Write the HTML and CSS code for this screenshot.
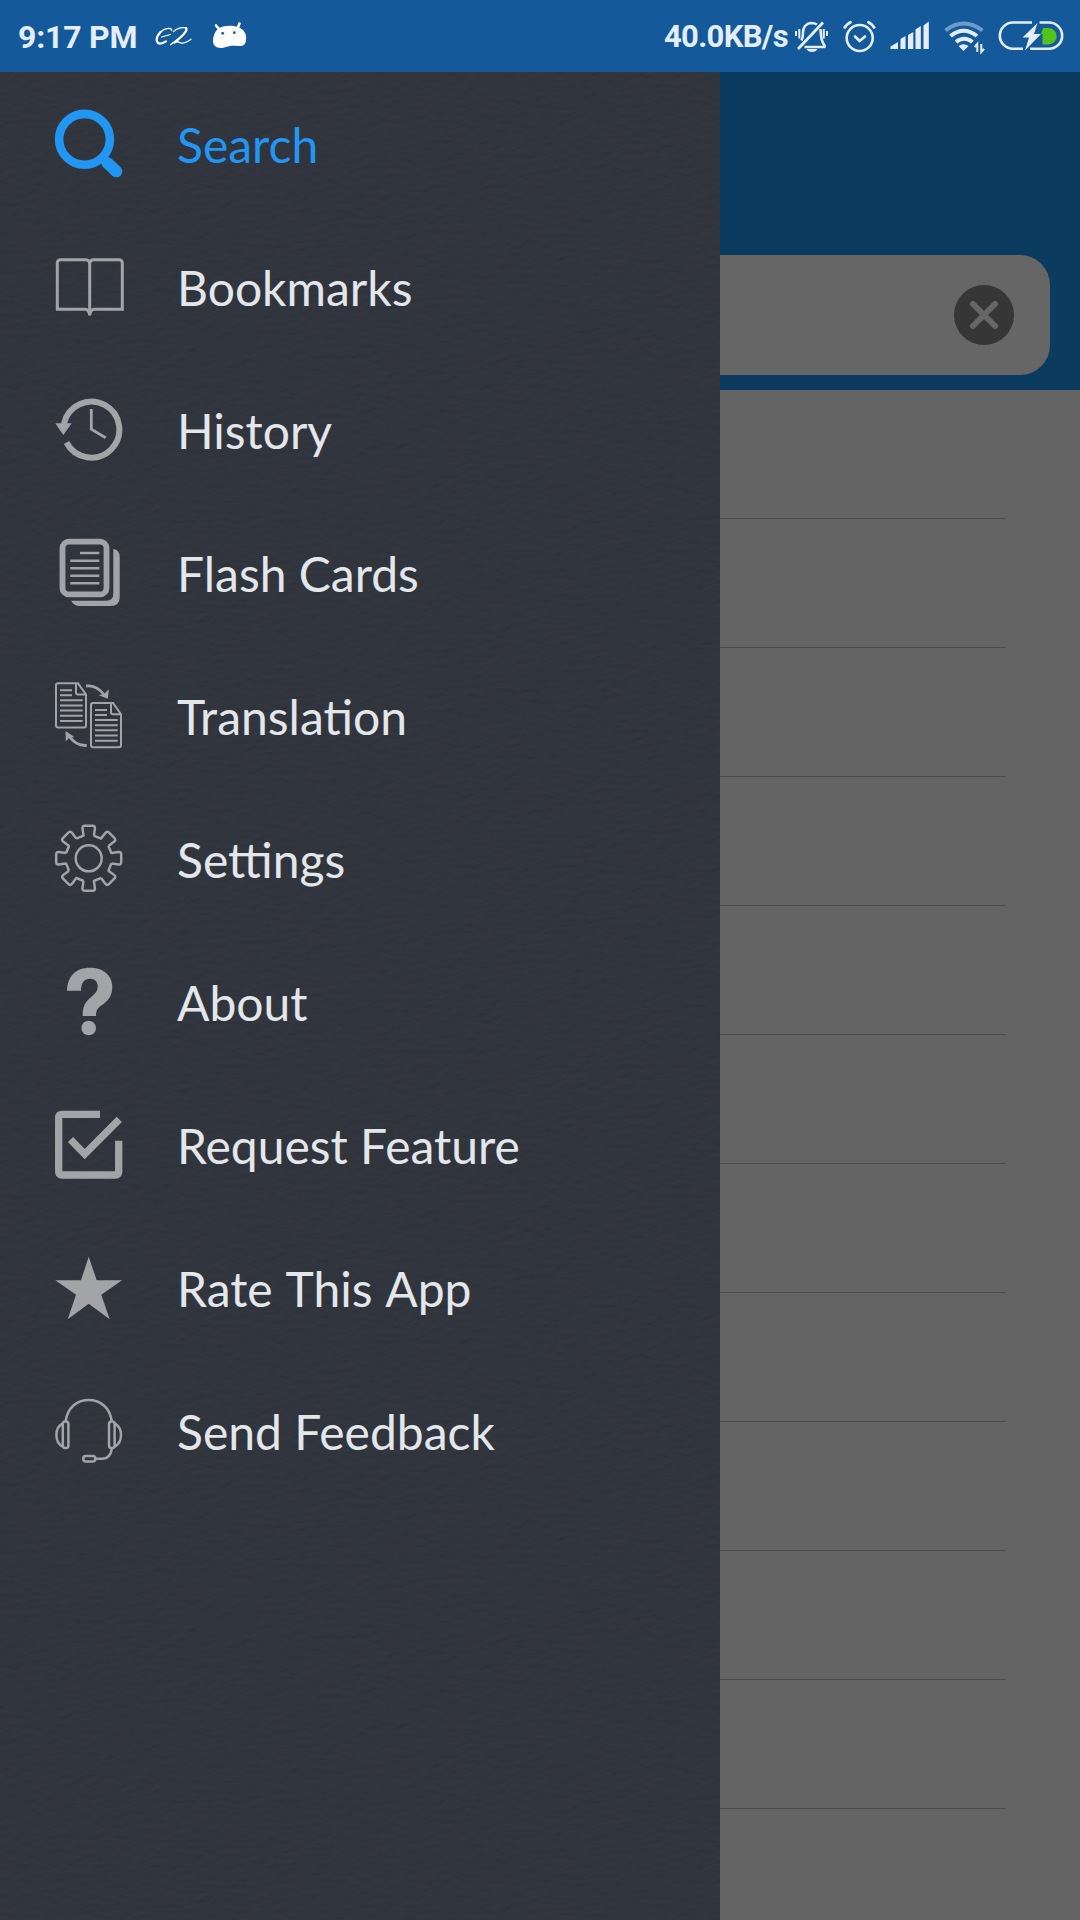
FILE: index.html
```html
<!DOCTYPE html>
<html lang="en">
<head>
<meta charset="utf-8">
<title>Dictionary</title>
<link rel="stylesheet" href="styles.css">
</head>
<body>
<div class="screen">
  <header class="status">
    <span class="time">9:17 PM</span>
    <svg class="status-icon" width="50" height="72" viewBox="150 0 50 72">
      <g fill="none" stroke="#fff" stroke-linecap="round" stroke-linejoin="round">
        <path stroke-width="1.300" d="M171.500 30.500c1-3-6-3-11 1.500-3.500 3.500-4.500 7-3.500 9"/>
        <path stroke-width="2.200" d="M160.500 32c-3.500 4-5 8.500-2.500 11 2 1.300 5 .3 8-1.700"/>
        <path stroke-width="1.200" d="M161.500 37l9-2.500"/>
        <path stroke-width="1.300" d="M173.500 31.500c3-2.500 8-4.500 13-3.500"/>
        <path stroke-width="2.300" d="M186 28.200c2.500 2-4 8-11.500 14.300"/>
        <path stroke-width="1.300" d="M170.500 44.800c3-3.500 7-3.500 10-2 3 1 7-1 10.500-3.600"/>
      </g>
    </svg>
    <svg class="status-icon" width="60" height="72" viewBox="200 0 60 72">
      <path fill="#fff" d="M219 28c6-3 14-3 20-.5 5 2 8 7 7 12 0 5-3 7-8 6.500-6-.5-8 0-12 1-6 2-13 1-13-6 0-5 2-10 6-13z"/>
      <path fill="none" stroke="#fff" stroke-width="2.600" stroke-linecap="round" d="M219 29l-3-3.500M237.500 28.500l2-5"/>
      <circle cx="222.700" cy="33.300" r="1.400" fill="#145999"/><circle cx="234.300" cy="32.700" r="1.400" fill="#145999"/>
    </svg>
    <span class="speed">40.0KB/s</span>
    <svg class="status-icon" width="46" height="72" viewBox="792 0 46 72">
      <g fill="none" stroke="#e4eefa" stroke-width="2.600" stroke-linejoin="round">
        <path d="M801.500 40.500c1-2 1.500-4 1.500-8 0-5 3-9 8-9.500 2.500 0 4.500.5 6 1.500"/>
        <path d="M820.500 29c.5 9 1 12 4 16.500v1.500h-20"/>
        <path stroke-width="2.800" d="M823 22.500l-25 26.500"/>
        <path stroke-width="2" d="M796 31v5M799.300 29v9.500M823.800 29v9.500M827 31v5"/>
      </g>
      <path fill="#e4eefa" d="M806.500 49h11q-1.500 3-5.500 3t-5.500-3z"/>
    </svg>
    <svg class="status-icon" width="46" height="72" viewBox="838 0 46 72">
      <g fill="none" stroke="#e4eefa" stroke-width="2.600" stroke-linecap="round">
        <circle cx="859.700" cy="38" r="13"/>
        <path stroke-width="2.700" stroke-linejoin="round" d="M855 36.500l4.700 4.500 5.300-4.500"/>
        <path stroke-width="3" d="M844.800 27.300q2-3 5.600-5M868.500 22.300q3.600 2 5.600 5"/>
      </g>
    </svg>
    <svg class="status-icon" width="52" height="72" viewBox="884 0 52 72">
      <path fill="#e4eefa" d="M890.500 49v-2.500l7.500-4.500v7zM900.500 49v-10l5-3v13zM908 49v-14l5.300-3v17zM915.500 49v-19.500l5.300-3.500v23zM923.500 49v-23.500l5.300-4v27.500z"/>
    </svg>
    <svg class="status-icon" width="54" height="72" viewBox="936 0 54 72">
      <g fill="none" stroke="#e4eefa" stroke-width="4">
        <path stroke="#6b9cc9" d="M945.500 30.500q18-14 37 0"/>
        <path d="M950.500 36q13-10.500 26.500 0M956 42q8-6.500 16.500 0"/>
        <path stroke-width="2" d="M977.300 52v-8l-2.800 3.200M981.300 44v8l2.800-3.200"/>
      </g>
      <path fill="#e4eefa" d="M958.500 46q5-3.500 10 0l-5 5z"/>
    </svg>
    <svg class="status-icon" width="90" height="72" viewBox="990 0 90 72">
      <path fill="none" stroke="#e4eefa" stroke-width="2.600" d="M1032 22.500h-19a13 13 0 0 0 0 26.300h10M1039.500 22.500h9.500a13 13 0 0 1 0 26.300h-19"/>
      <path fill="#52c41c" d="M1043 28h5.500a8 8 0 0 1 0 16.500h-6V34h-1.500z"/>
      <path fill="#e4eefa" d="M1037.500 23l-15 14.500h6.500l-4 13 16-16.500h-7z"/>
    </svg>
  </header>

  <main class="body">
    <nav class="drawer">
      <svg class="grain" width="720" height="1848" aria-hidden="true">
        <filter id="leather" x="0" y="0" width="100%" height="100%">
          <feTurbulence type="fractalNoise" baseFrequency="0.09 0.2" numOctaves="3" seed="4"/>
          <feDiffuseLighting surfaceScale="1.100" lighting-color="#34373f" diffuseConstant="1.350">
            <feDistantLight azimuth="250" elevation="48"/>
          </feDiffuseLighting>
        </filter>
        <rect width="720" height="1848" filter="url(#leather)"/>
      </svg>
      <ul class="menu">
        <li class="item active">
          <svg class="icon" viewBox="0 0 72 71"><circle class="line" cx="32.500" cy="31.300" r="25.400" stroke-width="8.600"/><path class="line" stroke-width="8" d="M48.500 49l7 7"/><path class="line" stroke-width="12" stroke-linecap="round" d="M55.500 55l8.800 8.300"/></svg>
          <span>Search</span>
        </li>
        <li class="item">
          <svg class="icon" viewBox="0 0 72 71"><path class="line" stroke-width="3" d="M37.700 13q0-4.300-4.200-4.300H8.500a3.200 3.200 0 0 0-3.200 3.200V58.300H33q4 0 4.700 6 .7-6 4.700-6H70.300V11.900a3.200 3.200 0 0 0-3.200-3.200H42q-4.300 0-4.300 4.300zV64"/></svg>
          <span>Bookmarks</span>
        </li>
        <li class="item">
          <svg class="icon" viewBox="0 0 72 71"><path class="line" stroke-width="6" d="M14.500 48.500A28 28 0 1 0 11.900 30"/><path class="solid" d="M3.300 29.300h16.400L11.300 41z"/><path class="line" stroke-width="2.800" d="M39.300 15v20.300l14.400 8.400"/></svg>
          <span>History</span>
        </li>
        <li class="item">
          <svg class="icon" viewBox="0 0 72 71"><rect class="line" stroke-width="5.800" x="10.500" y="4.600" width="44" height="52.800" rx="6.500"/><path class="solid" d="M61.300 11.700q6.400 1.500 6.400 8V60q0 9-9 9H28q-6 0-9-5.200H54q7.300 0 7.300-7.300z"/><path class="line" stroke-width="2.600" d="M28 16h19.300M18.300 23.700h29M18.300 31.200h29M18.300 38.800h29M18.300 46.300h29"/></svg>
          <span>Flash Cards</span>
        </li>
        <li class="item">
          <svg class="icon" viewBox="0 0 72 71"><g class="line" stroke-width="2"><g id="sheet"><path d="M24 3.300H6a2 2 0 0 0-2 2V45.500a2 2 0 0 0 2 2H32a2 2 0 0 0 2-2V14.500L26 3.300H24V12.500a2 2 0 0 0 2 2h8"/><path d="M8 10.200h12M8 15.200h12M8 20.300h22.700M8 25.500h22.700M8 30.600h22.700M8 35.700h22.700M8 41h22.700"/></g><use href="#sheet" x="35" y="19.700"/></g><path class="line" stroke-width="2.800" d="M34 6q10-1.500 17.500 8M34.700 65.500q-11 .5-17.200-9"/><path class="solid" d="M57 9.300l-1.200 9.500-9.200-3.500 5.500-1.500zM13.500 51l.3 10.300 3.200-3.200 5.500-1z"/></svg>
          <span>Translation</span>
        </li>
        <li class="item">
          <svg class="icon" viewBox="0 0 72 71"><g class="line" stroke-width="2.500" stroke-linejoin="round" transform="translate(36.700 35.300)"><circle r="13"/><path id="tooth" d="M-12.500-19.600-5.200-22.700-6.200-30Q-6.400-32.500-4-32.500H4Q6.400-32.500 6.200-30L5.200-22.700"/><use href="#tooth" transform="rotate(45)"/><use href="#tooth" transform="rotate(90)"/><use href="#tooth" transform="rotate(135)"/><use href="#tooth" transform="rotate(180)"/><use href="#tooth" transform="rotate(225)"/><use href="#tooth" transform="rotate(270)"/><use href="#tooth" transform="rotate(315)"/></g></svg>
          <span>Settings</span>
        </li>
        <li class="item">
          <svg class="icon" viewBox="0 0 72 71"><path class="solid" d="M15 24.700C15.500 10 24 1.700 38 1.700c13 0 22.300 7.300 22.300 19.300 0 10-5.300 14.500-10.300 18-4.500 3-6 5-6 11H30.700c0-8.500 1.300-12.500 7.300-18 5-4.500 7.700-6.500 7.700-11.500 0-4.700-2.700-7.700-7.700-7.700-6 0-9 4-9 11.900z"/><circle class="solid" cx="36.700" cy="62" r="7.300"/></svg>
          <span>About</span>
        </li>
        <li class="item">
          <svg class="icon" viewBox="0 0 72 71"><path class="line" stroke-width="7.300" d="M48 5.300H9.700a3 3 0 0 0-3 3V63a3 3 0 0 0 3 3H63.700a3 3 0 0 0 3-3V31.700M18.500 30.500l14.200 14.500 34.600-34.600"/></svg>
          <span>Request Feature</span>
        </li>
        <li class="item rate">
          <svg class="icon" viewBox="0 0 72 71"><path class="solid" d="M36.700 4.700l8 23.600H70L49.300 42.700l8.400 24.600-21-15.600-21 15.600L24 42.700 3.300 28.300H29z"/></svg>
          <span>Rate This App</span>
        </li>
        <li class="item">
          <svg class="icon" viewBox="0 0 72 71"><g class="line" stroke-width="2.500"><path d="M13.500 26.700C15.500 12.500 25 5 36.700 5s21.200 7.500 23.200 21.700"/><rect x="10.800" y="26.500" width="5.600" height="26.500" rx="2.500"/><rect x="57" y="26.500" width="5.600" height="26.500" rx="2.500"/><path d="M10.800 28.500c-8.500 4-8.500 19 0 23M62.600 28.500c8.500 4 8.500 19 0 23M59.800 53q-1 10.800-10 10.800h-6.500"/><rect x="31.300" y="61" width="12" height="5.600" rx="2.500"/></g></svg>
          <span>Send Feedback</span>
        </li>
      </ul>
    </nav>

    <section class="page">
      <div class="topbar">
        <div class="field">
          <svg width="60" height="60" viewBox="0 0 60 60"><circle cx="30" cy="30" r="30" fill="#353635"/><path stroke="#666" stroke-width="6" stroke-linecap="round" d="M19 19l22 22M41 19L19 41"/></svg>
        </div>
      </div>
      <div class="rows">
        <div class="row"></div><div class="row"></div><div class="row"></div><div class="row"></div>
        <div class="row"></div><div class="row"></div><div class="row"></div><div class="row"></div>
        <div class="row"></div><div class="row"></div><div class="row"></div>
      </div>
    </section>
  </main>
</div>
</body>
</html>
```
FILE: styles.css
```css
* { box-sizing: border-box; }

body { margin: 0; }

.screen {
  width: 1080px;
  height: 1920px;
  display: flex;
  flex-direction: column;
  overflow: hidden;
}

.status {
  height: 72px;
  flex: none;
  display: flex;
  align-items: center;
  background: #145999;
  color: #e4eefa;
  font: 700 32px/72px Roboto, sans-serif;
  white-space: nowrap;
}

.status-icon { flex: none; display: block; }

.time {
  width: 150px;
  padding: 1px 0 0 18px;
  letter-spacing: -0.2px;
}

.speed {
  margin-left: auto;
  padding: 1px 4px 0 0;
  font-size: 31px;
  letter-spacing: -0.65px;
}

.body {
  flex: 1;
  display: flex;
}

.drawer {
  position: relative;
  width: 720px;
  flex: none;
  background: #30343d;
}

.grain {
  position: absolute;
  inset: 0;
  opacity: 0.28;
}

.menu {
  position: relative;
  margin: 0;
  padding: 0;
  list-style: none;
}

.item {
  height: 143px;
  padding-left: 52px;
  display: flex;
  align-items: center;
  gap: 53px;
  color: #a2a4a7;
  font: 400 48px/60px Lato, sans-serif;
}

.item span {
  padding-top: 3px;
  color: #e3e6ea;
}

.item.active,
.item.active span { color: #2196f3; }

.item.rate span { word-spacing: 2px; }

.icon {
  width: 72px;
  height: 71px;
  flex: none;
}

.line { fill: none; stroke: currentColor; }

.solid { fill: currentColor; }

.page {
  flex: 1;
  background: #646464;
}

.topbar {
  height: 318px;
  padding: 183px 30px 0 0;
  background: #0b3c5f;
}

.field {
  height: 120px;
  padding-right: 36px;
  display: flex;
  align-items: center;
  justify-content: flex-end;
  background: #666;
  border-radius: 0 30px 30px 0;
}

.rows { padding-right: 74px; }

.row {
  height: 129px;
  border-bottom: 1px solid #4b4b4b;
}
```
